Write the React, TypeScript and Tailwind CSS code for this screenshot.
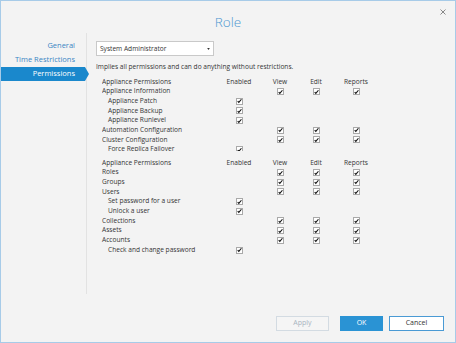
import React from "react";

type Row = {
  label: string;
  sub?: boolean;
  enabled?: boolean;
  ver?: boolean;
  header?: boolean;
};

const groupOne: Row[] = [
  { label: "Appliance Permissions", header: true },
  { label: "Appliance Information", ver: true },
  { label: "Appliance Patch", sub: true, enabled: true },
  { label: "Appliance Backup", sub: true, enabled: true },
  { label: "Appliance Runlevel", sub: true, enabled: true },
  { label: "Automation Configuration", ver: true },
  { label: "Cluster Configuration", ver: true },
  { label: "Force Replica Failover", sub: true, enabled: true },
];

const groupTwo: Row[] = [
  { label: "Appliance Permissions", header: true },
  { label: "Roles", ver: true },
  { label: "Groups", ver: true },
  { label: "Users", ver: true },
  { label: "Set password for a user", sub: true, enabled: true },
  { label: "Unlock a user", sub: true, enabled: true },
  { label: "Collections", ver: true },
  { label: "Assets", ver: true },
  { label: "Accounts", ver: true },
  { label: "Check and change password", sub: true, enabled: true },
];

function Check() {
  return (
    <span className="flex h-[7px] w-[7px] items-center justify-center border border-[#a9a9a9] bg-white">
      <svg width="6" height="6" viewBox="0 0 6 6">
        <path d="M0.8 3.1 L2.2 4.6 L5.3 0.9" fill="none" stroke="#111" strokeWidth="1.3" />
      </svg>
    </span>
  );
}

function PermRow({ row }: { row: Row }) {
  const cell = "flex items-center justify-center";
  return (
    <div className="grid h-[9.7px] grid-cols-[124px_26px_56px_16px_64px] items-center leading-none">
      <div className={row.sub ? "pl-[6px] whitespace-nowrap" : "whitespace-nowrap"}>{row.label}</div>
      <div className={cell}>{row.header ? "Enabled" : row.enabled ? <Check /> : null}</div>
      <div className={cell}>{row.header ? "View" : row.ver ? <Check /> : null}</div>
      <div className={cell}>{row.header ? "Edit" : row.ver ? <Check /> : null}</div>
      <div className={cell}>{row.header ? "Reports" : row.ver ? <Check /> : null}</div>
    </div>
  );
}

export default function App() {
  return (
    <div
      className="relative flex h-[343px] w-[456px] flex-col border border-[#a7cbe8] bg-[#f3f3f3] text-[#333]"
      style={{ fontFamily: '"Open Sans", "Noto Sans", sans-serif' }}
    >
      <div className="flex h-[32px] flex-none justify-center pt-[15px]">
        <span className="text-[13.5px] font-light leading-none text-[#4d97d1]">Role</span>
      </div>
      <button className="absolute right-[9px] top-[7px] flex h-[7px] w-[7px] items-center justify-center">
        <svg width="6" height="6" viewBox="0 0 6 6">
          <path d="M0.5 0.5 L5.5 5.5 M5.5 0.5 L0.5 5.5" stroke="#7a7a7a" strokeWidth="0.9" />
        </svg>
      </button>

      <div className="flex h-[261px] flex-none">
        <nav className="flex w-[85px] flex-none flex-col pt-[6px] text-[7.5px]">
          <div className="flex h-[14px] items-center justify-end pr-[11px] text-[#3a86c4]">General</div>
          <div className="flex h-[14px] items-center justify-end pr-[11px] text-[#3a86c4]">Time Restrictions</div>
          <div className="z-10 mr-[-3px] flex h-[14px] items-stretch">
            <div className="flex flex-1 items-center justify-end bg-[#1a88cc] pr-[10px] text-white">Permissions</div>
            <div className="h-0 w-0 border-y-[7px] border-l-[4px] border-y-transparent border-l-[#1a88cc]" />
          </div>
        </nav>
        <div className="w-px flex-none bg-[#e2e2e2]" />

        <section className="flex flex-1 flex-col pl-[9px] pt-[8px] text-[6.6px]">
          <div className="flex h-[15px] w-[118px] items-center justify-between border border-[#c9c9c9] bg-white pl-[3px] pr-[3px]">
            <span>System Administrator</span>
            <svg width="3" height="2" viewBox="0 0 4 3">
              <path d="M0 0 H4 L2 3 Z" fill="#333" />
            </svg>
          </div>
          <p className="mt-[6px] h-[10px] leading-[10px]">Implies all permissions and can do anything without restrictions.</p>

          <div className="ml-[6px] mt-[5px] flex flex-col">
            <div className="h-[74px] overflow-hidden">
              {groupOne.map((r) => (
                <PermRow key={r.label} row={r} />
              ))}
            </div>
            <div className="mt-[7px]">
              {groupTwo.map((r, i) => (
                <PermRow key={i} row={r} />
              ))}
            </div>
          </div>
        </section>
      </div>

      <div className="flex flex-1 items-start justify-end gap-[6px] pr-[11px] pt-[22px] text-[7px]">
        <button className="mr-[5px] h-[15px] w-[53px] border border-[#d3dbe2] bg-[#f5f5f5] text-[#a8b4bf]">Apply</button>
        <button className="h-[15px] w-[43px] bg-[#2a93d4] text-white">OK</button>
        <button className="h-[15px] w-[55px] border border-[#4a9ad4] bg-white text-[#333]">Cancel</button>
      </div>
    </div>
  );
}
